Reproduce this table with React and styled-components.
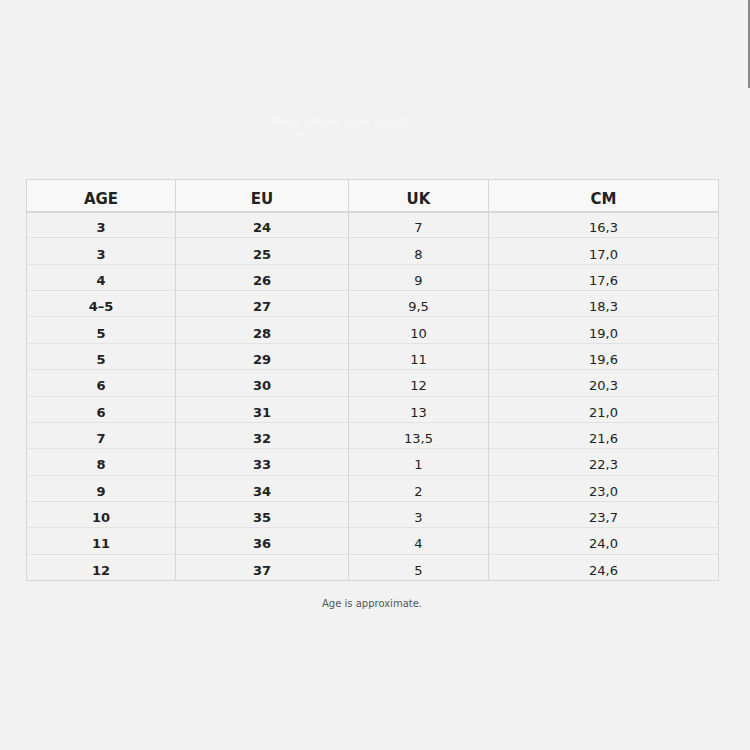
import React from "react";
import styled, { createGlobalStyle } from "styled-components";

const Global = createGlobalStyle`
  html, body { margin: 0; padding: 0; background: #f2f2f2; }
  body { font-family: "DejaVu Sans", "Liberation Sans", sans-serif; color: #222; }
`;

const Page = styled.div`
  padding: 0 32px 0 26px;
  min-height: 750px;
  box-sizing: border-box;
`;

const Intro = styled.header`
  height: 179px;
  box-sizing: border-box;
  padding: 115px 64px 0 0;
  display: flex;
  flex-direction: column;
  align-items: center;
  color: #f4f4f4;
`;

const IntroTitle = styled.div`
  font-size: 12px;
  line-height: 14px;
  font-weight: bold;
`;

const IntroSub = styled.div`
  font-size: 11px;
  line-height: 14px;
  margin-top: 1px;
`;

const Table = styled.table`
  width: 692px;
  border-collapse: collapse;
  table-layout: fixed;
  border: 1px solid #d6d6d6;
`;

const HeadCell = styled.th`
  height: 32px;
  padding: 0;
  background: #f8f8f8;
  font-size: 15px;
  font-weight: bold;
  color: #222;
  text-align: center;
  border-left: 1px solid #d6d6d6;
  border-bottom: 2px solid #d8d8d8;
  vertical-align: middle;
  padding-top: 8px;
  box-sizing: border-box;
`;

const Row = styled.tr`
  height: 26.36px;
`;

const Cell = styled.td`
  padding: 0;
  padding-top: 6px;
  font-size: 13px;
  line-height: 15px;
  font-weight: ${(p) => (p.$bold ? "bold" : "normal")};
  color: #222;
  text-align: center;
  border-left: 1px solid #d6d6d6;
  border-top: 1px solid #e2e2e2;
  vertical-align: middle;
`;

const Caption = styled.p`
  width: 692px;
  margin: 17px 0 0;
  text-align: center;
  font-size: 10px;
  color: #555;
`;

const ScrollThumb = styled.div`
  position: fixed;
  top: 0;
  right: 0;
  width: 2px;
  height: 88px;
  background: #8a8a8a;
`;

const rows = [
  ["3", "24", "7", "16,3"],
  ["3", "25", "8", "17,0"],
  ["4", "26", "9", "17,6"],
  ["4–5", "27", "9,5", "18,3"],
  ["5", "28", "10", "19,0"],
  ["5", "29", "11", "19,6"],
  ["6", "30", "12", "20,3"],
  ["6", "31", "13", "21,0"],
  ["7", "32", "13,5", "21,6"],
  ["8", "33", "1", "22,3"],
  ["9", "34", "2", "23,0"],
  ["10", "35", "3", "23,7"],
  ["11", "36", "4", "24,0"],
  ["12", "37", "5", "24,6"],
];

export default function App() {
  return (
    <>
      <Global />
      <ScrollThumb />
      <Page>
        <Intro>
          <IntroTitle>Kids' shoe size chart</IntroTitle>
          <IntroSub>Find the right fit</IntroSub>
        </Intro>
        <Table>
          <colgroup>
            <col style={{ width: "149px" }} />
            <col style={{ width: "173px" }} />
            <col style={{ width: "140px" }} />
            <col style={{ width: "230px" }} />
          </colgroup>
          <thead>
            <tr>
              <HeadCell>AGE</HeadCell>
              <HeadCell>EU</HeadCell>
              <HeadCell>UK</HeadCell>
              <HeadCell>CM</HeadCell>
            </tr>
          </thead>
          <tbody>
            {rows.map((r, i) => (
              <Row key={i}>
                <Cell $bold>{r[0]}</Cell>
                <Cell $bold>{r[1]}</Cell>
                <Cell>{r[2]}</Cell>
                <Cell>{r[3]}</Cell>
              </Row>
            ))}
          </tbody>
        </Table>
        <Caption>Age is approximate.</Caption>
      </Page>
    </>
  );
}
